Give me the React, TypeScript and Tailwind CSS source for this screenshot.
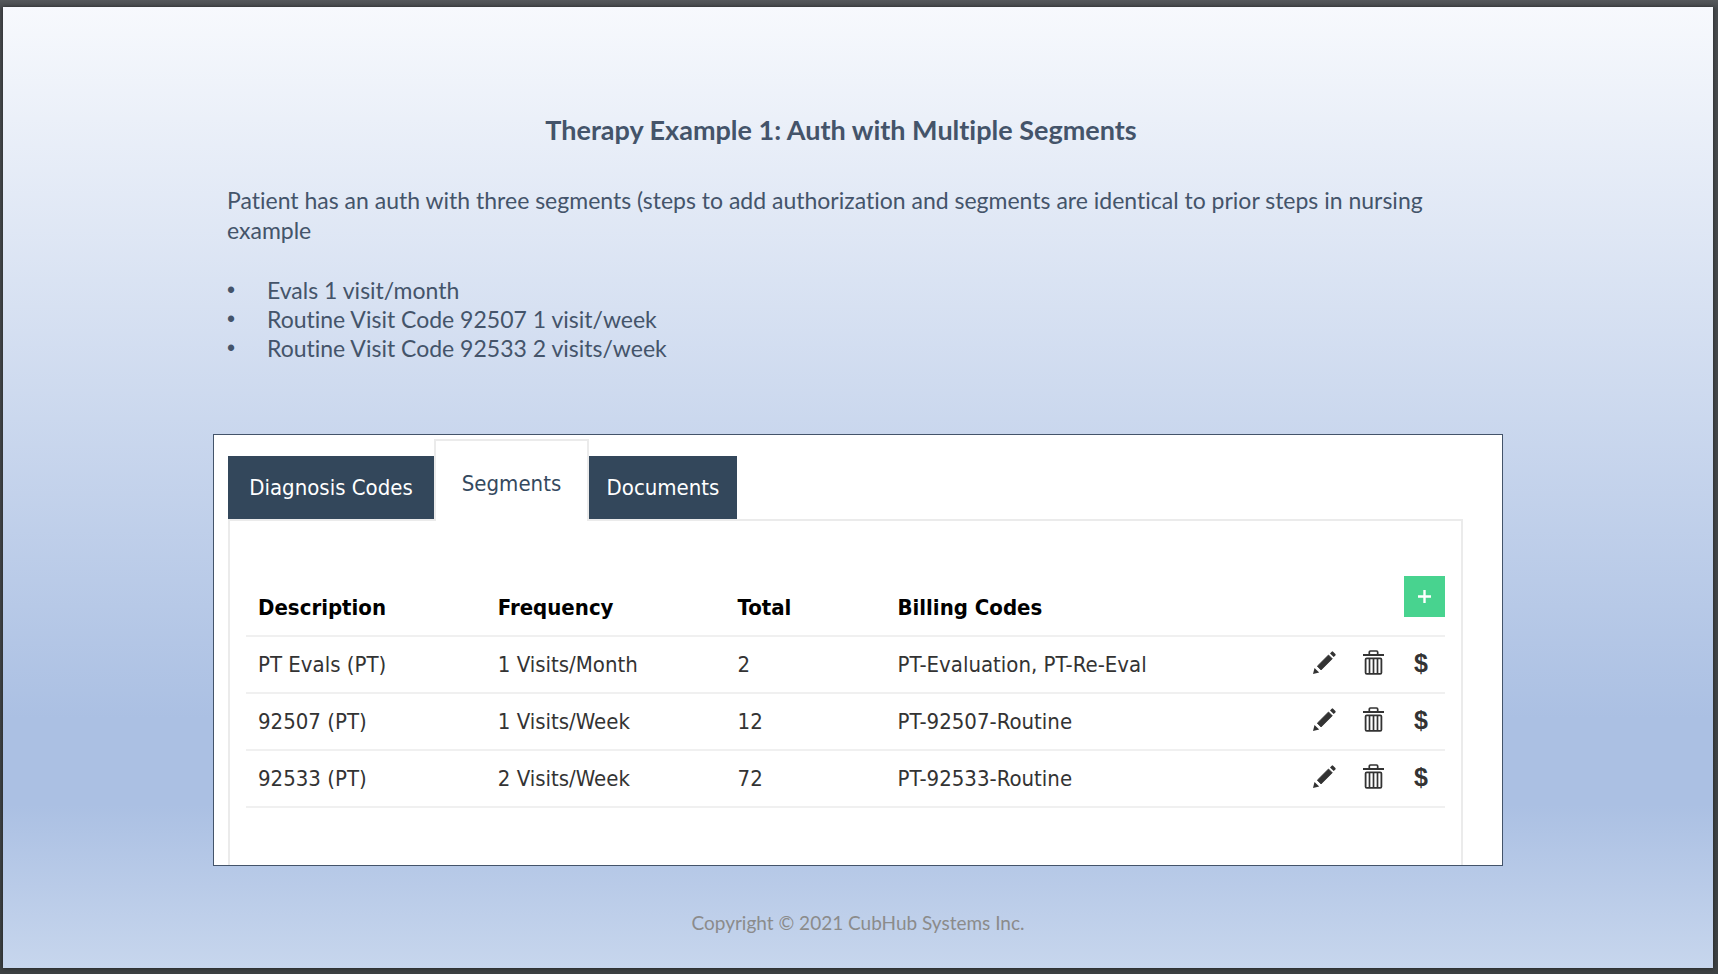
type Segment = {
  description: string;
  frequency: string;
  total: string;
  codes: string;
};

const segments: Segment[] = [
  { description: "PT Evals (PT)", frequency: "1 Visits/Month", total: "2", codes: "PT-Evaluation, PT-Re-Eval" },
  { description: "92507 (PT)", frequency: "1 Visits/Week", total: "12", codes: "PT-92507-Routine" },
  { description: "92533 (PT)", frequency: "2 Visits/Week", total: "72", codes: "PT-92533-Routine" },
];

const visits = [
  "Evals 1 visit/month",
  "Routine Visit Code 92507 1 visit/week",
  "Routine Visit Code 92533 2 visits/week",
];

function PencilIcon() {
  return (
    <svg width="24" height="23" viewBox="0 0 24 23" fill="currentColor" aria-hidden="true">
      <path d="M0 23 1.5 17 6.2 21.5Z" />
      <path d="M4.3 15.2 15.5 4 19.3 7.8 8.1 19Z" stroke="currentColor" strokeWidth="0.8" />
      <path d="M17 2.4 18.7.7Q19.4 0 20.1.7L22.4 3Q23 3.7 22.4 4.4L20.7 6.1Z" />
    </svg>
  );
}

function TrashIcon() {
  return (
    <svg width="21" height="25" viewBox="0 0 21 25" fill="none" stroke="currentColor" aria-hidden="true">
      <path d="M0 5H21" strokeWidth="2" />
      <path d="M6.3 4.6V2.2Q6.3 1 7.5 1H13.5Q14.7 1 14.7 2.2V4.6" strokeWidth="1.7" />
      <rect x="2.6" y="8.3" width="15.8" height="15.6" rx="1.2" strokeWidth="1.8" />
      <path d="M6.5 8.5V24M10.5 8.5V24M14.5 8.5V24" strokeWidth="1.7" />
    </svg>
  );
}

function PlusIcon() {
  return (
    <svg width="13" height="13" viewBox="0 0 13 13" fill="none" stroke="currentColor" strokeWidth="2.4" aria-hidden="true">
      <path d="M0 6.5H13M6.5 0V13" />
    </svg>
  );
}

function RowActions({ name }: { name: string }) {
  return (
    <div className="flex justify-end pb-1 text-[#333333]">
      <button type="button" aria-label={`Edit ${name}`} className="flex h-10 w-12 items-center justify-center">
        <PencilIcon />
      </button>
      <button type="button" aria-label={`Delete ${name}`} className="flex h-10 w-12 items-center justify-center">
        <TrashIcon />
      </button>
      <button
        type="button"
        aria-label={`Billing for ${name}`}
        className="flex h-10 w-12 items-center justify-center font-['Liberation_Sans',sans-serif] text-[25px] font-bold"
      >
        $
      </button>
    </div>
  );
}

function SegmentTable() {
  return (
    <table className="w-full table-fixed border-collapse text-left text-[22px] leading-[30px] text-[#333333]">
      <thead>
        <tr className="h-[60px] border-b-2 border-[#f0f0f0] align-bottom text-black">
          <th className="w-1/5 px-3 pb-3">Description</th>
          <th className="w-1/5 px-3 pb-3">Frequency</th>
          <th className="w-2/15 px-3 pb-3">Total</th>
          <th className="px-3 pb-3">Billing Codes</th>
          <th className="w-2/15 align-top">
            <button
              type="button"
              aria-label="Add segment"
              className="ml-auto flex size-[41px] items-center justify-center bg-[#48d38f] text-white"
            >
              <PlusIcon />
            </button>
          </th>
        </tr>
      </thead>
      <tbody>
        {segments.map((s) => (
          <tr key={s.description} className="h-[57px] border-b-2 border-[#f0f0f0]">
            <td className="px-3">{s.description}</td>
            <td className="px-3">{s.frequency}</td>
            <td className="px-3">{s.total}</td>
            <td className="px-3">{s.codes}</td>
            <td>
              <RowActions name={s.description} />
            </td>
          </tr>
        ))}
      </tbody>
    </table>
  );
}

export default function App() {
  return (
    <div className="flex min-h-screen flex-col bg-linear-to-b from-[#55585b] via-[#484b4e] via-[1%] to-[#3d4143] pt-[7px] pr-[5px] pb-[6px] pl-[3px]">
      <main className="flex grow flex-col items-center bg-[linear-gradient(to_bottom,#f7f9fd_0%,#abc0e3_74%,#abc0e3_83%,#c7d6ed_100%)] pt-[108px] font-[Lato,sans-serif] text-[#44546a] shadow-[0_0_4px_rgba(0,0,0,0.5)] [font-variant-ligatures:none]">
        <div className="w-full max-w-[1290px]">
          <section className="pr-12 pl-3.5 text-[23px] leading-[30px]">
            <h1 className="text-center text-[27px] font-bold">Therapy Example 1: Auth with Multiple Segments</h1>
            <p className="mt-10">
              Patient has an auth with three segments (steps to add authorization and segments are identical to prior
              steps in nursing example
            </p>
            <ul className="mt-[31px] leading-[29px]">
              {visits.map((v) => (
                <li key={v} className="flex">
                  <span className="w-10 font-['Liberation_Sans',sans-serif]" aria-hidden="true">
                    •
                  </span>
                  {v}
                </li>
              ))}
            </ul>
          </section>

          <section className="mt-[71px] border border-[#44546a] bg-white pt-1 pr-[39px] pl-3.5 font-['DejaVu_Sans_Condensed','DejaVu_Sans',sans-serif]">
            <div role="tablist" className="flex items-end text-[22px] leading-[30px] text-white">
              <button type="button" role="tab" aria-selected="false" className="h-[63px] w-[206px] bg-[#33475b]">
                Diagnosis Codes
              </button>
              <button
                type="button"
                role="tab"
                aria-selected="true"
                className="z-10 -mb-0.5 h-[82px] w-[155px] border-2 border-b-0 border-[#ebebeb] bg-white pt-1.5 text-[#34495e]"
              >
                Segments
              </button>
              <button type="button" role="tab" aria-selected="false" className="h-[63px] w-[148px] bg-[#33475b]">
                Documents
              </button>
            </div>
            <div role="tabpanel" className="border-2 border-b-0 border-[#ebebeb] px-4 pt-[55px] pb-[57px]">
              <SegmentTable />
            </div>
          </section>
        </div>

        <footer className="mt-auto pb-[30px] text-[19px] leading-[30px] text-[#8b8b8b]">
          Copyright © 2021 CubHub Systems Inc.
        </footer>
      </main>
    </div>
  );
}
